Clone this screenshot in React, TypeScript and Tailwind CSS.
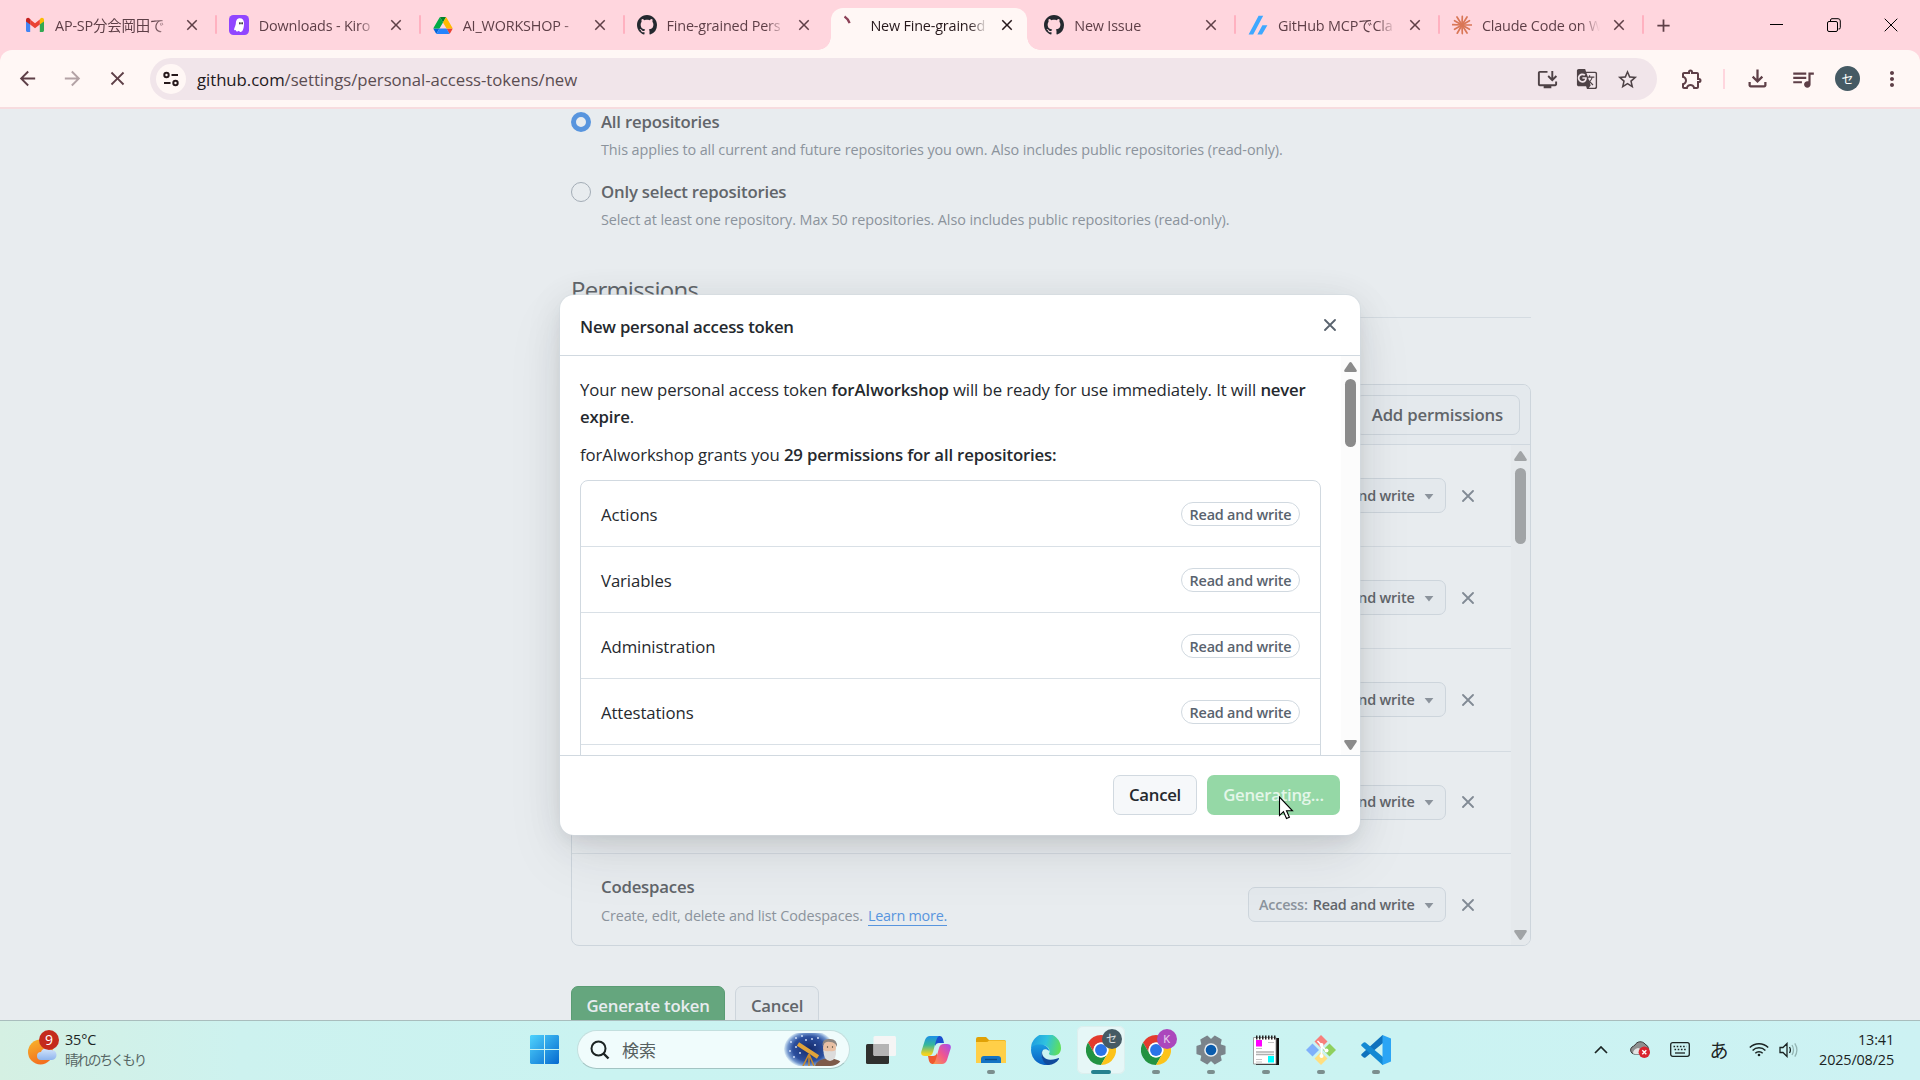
import type { ReactNode } from "react";
import {
  MdAdd,
  MdArrowBack,
  MdArrowForward,
  MdClose,
  MdGTranslate,
  MdMoreVert,
  MdOutlineExtension,
  MdOutlineFileDownload,
  MdOutlineInstallDesktop,
  MdQueueMusic,
  MdStarBorder,
} from "react-icons/md";

/* ---------- Favicons ---------- */

const GmailIcon = () => (
  <svg viewBox="0 0 20 20" className="size-5">
    <path d="M1 5.5V15.6A1.3 1.3 0 0 0 2.3 17H5.2V8z" fill="#4285f4" />
    <path d="M19 5.5V15.6A1.3 1.3 0 0 1 17.7 17H14.8V8z" fill="#34a853" />
    <path d="M14.8 4.6V9.6L19 6.5V5C19 3 16.8 2.2 15.4 3.4z" fill="#fbbc04" />
    <path d="M5.2 9.6V4.6L10 8.2L14.8 4.6V9.6L10 13.2z" fill="#ea4335" />
    <path d="M1 5V6.5L5.2 9.6V4.2L4.6 3.4C3.2 2.2 1 3 1 5z" fill="#c5221f" />
  </svg>
);

const KiroIcon = () => (
  <svg viewBox="0 0 20 20" className="size-5">
    <rect width="20" height="20" rx="4.5" fill="#9046ff" />
    <path d="M10.8 3.2C8 3.2 7 5.4 6.900 8c-.1 2.6-1.6 4.6-1.8 6.2-.1 1 .9 1.2 1.8.7-.1 1.6 1.7 2.2 3 .9.6 1.7 2.7 1.3 3.7-.4 1-1.7 1.5-4.1 1.4-7.3-.1-3-1.5-4.9-4.2-4.9z" fill="#fff" />
    <ellipse cx="10.9" cy="8.3" rx=".7" ry="1.2" fill="#222" />
    <ellipse cx="13.1" cy="8.3" rx=".7" ry="1.2" fill="#222" />
  </svg>
);

const DriveIcon = () => (
  <svg viewBox="0 0 87.3 78" className="h-[17px] w-5">
    <path d="m6.6 66.85 3.85 6.65c.8 1.4 1.95 2.5 3.3 3.3l13.75-23.8h-27.5c0 1.55.4 3.1 1.2 4.5z" fill="#0066da" />
    <path d="m43.65 25-13.75-23.8c-1.35.8-2.5 1.9-3.3 3.3l-25.4 44a9.06 9.06 0 0 0 -1.2 4.5h27.5z" fill="#00ac47" />
    <path d="m73.55 76.8c1.35-.8 2.5-1.9 3.3-3.3l1.6-2.75 7.65-13.25c.8-1.4 1.2-2.95 1.2-4.5h-27.502l5.852 11.5z" fill="#ea4335" />
    <path d="m43.65 25 13.75-23.8c-1.35-.8-2.9-1.2-4.5-1.2h-18.5c-1.6 0-3.15.45-4.5 1.2z" fill="#00832d" />
    <path d="m59.8 53h-32.3l-13.75 23.8c1.35.8 2.9 1.2 4.5 1.2h50.8c1.6 0 3.15-.45 4.5-1.2z" fill="#2684fc" />
    <path d="m73.4 26.5-12.7-22c-.8-1.4-1.95-2.5-3.3-3.3l-13.75 23.8 16.15 28h27.45c0-1.55-.4-3.1-1.2-4.5z" fill="#ffba00" />
  </svg>
);

const ZennIcon = () => (
  <svg viewBox="0 0 20 20" className="size-5">
    <path d="M.6 19.5 10.6.8h4.6L5.2 19.5zM9.4 19.5l5-9.3h5L14 19.5z" fill="#3ea8ff" />
  </svg>
);

const rays = [0, 30, 58, 88, 120, 150, 182, 210, 238, 272, 302, 330];
const ClaudeIcon = () => (
  <svg viewBox="-10 -10 20 20" className="size-5">
    {rays.map((a, i) => (
      <line key={a} x1="0" y1="0" x2={i % 2 ? 8.6 : 9.5} y2="0" stroke="#d97757" strokeWidth="1.7" strokeLinecap="round" transform={`rotate(${a})`} />
    ))}
  </svg>
);

const Spinner = () => (
  <svg viewBox="0 0 20 20" className="size-5">
    <path d="M4.5 1.5C6.8 3 8.600 5 9.6 8.200" fill="none" stroke="#8c4157" strokeWidth="2.2" />
  </svg>
);

const Github = () => (
  <svg viewBox="0 0 16 16" className="size-5 text-[#24292f]" fill="currentColor">
    <path d="M8 0C3.58 0 0 3.58 0 8c0 3.54 2.29 6.53 5.47 7.59.4.07.55-.17.55-.38 0-.19-.01-.82-.01-1.49-2.01.37-2.53-.49-2.69-.94-.09-.23-.48-.94-.82-1.13-.28-.15-.68-.52-.01-.53.63-.01 1.08.58 1.23.82.72 1.21 1.87.87 2.33.66.07-.52.28-.87.51-1.07-1.78-.2-3.64-.89-3.64-3.95 0-.87.31-1.59.82-2.15-.08-.2-.36-1.02.08-2.12 0 0 .67-.21 2.2.82.64-.18 1.32-.27 2-.27.68 0 1.36.09 2 .27 1.53-1.04 2.2-.82 2.2-.82.44 1.1.16 1.92.08 2.12.51.56.82 1.27.82 2.15 0 3.07-1.87 3.75-3.65 3.95.29.25.54.73.54 1.48 0 1.07-.01 1.93-.01 2.2 0 .21.15.46.55.38A8.013 8.013 0 0 0 16 8c0-4.42-3.58-8-8-8z" />
  </svg>
);

/* ---------- Browser chrome ---------- */

type TabInfo = { title: string; icon: ReactNode; active?: boolean; sep?: boolean };
const tabs: TabInfo[] = [
  { title: "AP-SP分会岡田で", icon: <GmailIcon />, sep: true },
  { title: "Downloads - Kiro", icon: <KiroIcon />, sep: true },
  { title: "AI_WORKSHOP -", icon: <DriveIcon />, sep: true },
  { title: "Fine-grained Pers", icon: <Github /> },
  { title: "New Fine-grained", icon: <Spinner />, active: true },
  { title: "New Issue", icon: <Github />, sep: true },
  { title: "GitHub MCPでCla", icon: <ZennIcon />, sep: true },
  { title: "Claude Code on W", icon: <ClaudeIcon />, sep: true },
];

function Tab({ title, icon, active, sep }: TabInfo) {
  return (
    <div className="relative flex h-[50px] w-[203.85px] shrink-0 items-center pl-[12px]">
      {active && (
        <div className="absolute top-[8px] right-[5px] bottom-0 left-[3px] rounded-t-[12px] bg-[#fff7f5]">
          <div className="absolute bottom-0 -left-[13px] size-[13px] bg-[radial-gradient(circle_at_0_0,#ffd6de_12.5px,#fff7f5_13px)]" />
          <div className="absolute -right-[13px] bottom-0 size-[13px] bg-[radial-gradient(circle_at_100%_0,#ffd6de_12.5px,#fff7f5_13px)]" />
        </div>
      )}
      <div className="relative flex size-5 items-center justify-center">{icon}</div>
      <div
        className={`relative mt-px ml-[10px] w-[118px] overflow-hidden text-[14.4px] leading-6 tracking-[-0.012em] whitespace-nowrap [mask-image:linear-gradient(to_right,#000_84%,transparent)] ${
          active ? "text-[#26181b]" : "text-[#5e3f47]"
        }`}
      >
        {title}
      </div>
      <MdClose className={`relative ml-[10px] size-[18px] ${active ? "text-[#26181b]" : "text-[#5e3f47]"}`} />
      {sep && <div className="absolute top-[15px] right-0 h-[19px] w-[2px] rounded bg-[#ffb1c0]" />}
    </div>
  );
}

function TabStrip() {
  return (
    <div className="flex h-[50px] bg-[#ffd6de] pl-[13px]">
      {tabs.map((t, i) => (
        <Tab key={i} {...t} />
      ))}
      <MdAdd className="mt-[15px] ml-[9px] size-[21px] text-[#5e3f47]" />
      <div className="mr-[22px] ml-auto flex items-center gap-[43px] text-black">
        <svg viewBox="0 0 14 14" className="size-[14px]"><path d="M0 6.5H13" stroke="currentColor" fill="none" /></svg>
        <svg viewBox="0 0 14 14" className="size-[14px]" fill="none" stroke="currentColor">
          <rect x=".5" y="3.5" width="10" height="10" rx="1.5" />
          <path d="M3.5 3V2A1.5 1.5 0 0 1 5 .7H11A2.3 2.3 0 0 1 13.3 3V9.5A1.5 1.5 0 0 1 11.5 11" />
        </svg>
        <svg viewBox="0 0 14 14" className="size-[14px]"><path d="M.7 .7L13.3 13.3M13.3 .7L.7 13.3" stroke="currentColor" fill="none" /></svg>
      </div>
    </div>
  );
}

function Toolbar() {
  return (
    <div className="bg-[#ffd6de]">
      <div className="flex h-[59px] items-center rounded-t-[12px] border-b-2 border-[#f7dcdf] bg-[#fff7f5] text-[#5e3f47]">
        <MdArrowBack className="ml-[16px] size-[23px]" />
        <MdArrowForward className="ml-[22px] size-[23px] text-[#b3a2a5]" />
        <MdClose className="ml-[22px] size-[23px]" />
        <div className="mt-px ml-[21px] flex h-[42px] w-[1507px] items-center rounded-full bg-[#f1e5ea] text-[#4e4246]">
          <div className="ml-[6px] flex size-[30px] items-center justify-center rounded-full bg-[#fff7f5]">
            <svg viewBox="0 0 18 18" className="size-[18px]" fill="none" stroke="#26181b" strokeWidth="2">
              <circle cx="4.5" cy="5" r="2.2" />
              <path d="M9.5 5H16M2 13H8.5" />
              <circle cx="13.5" cy="13" r="2.2" />
            </svg>
          </div>
          <div className="mt-px ml-[11px] text-[16.75px] tracking-[-0.003em] text-[#5b4d52]">
            <span className="text-[#22191c]">github.com</span>/settings/personal-access-tokens/new
          </div>
          <MdOutlineInstallDesktop className="ml-auto size-[23px]" />
          <MdGTranslate className="ml-[17px] size-[22px]" />
          <MdStarBorder className="mr-[18px] ml-[18px] size-[23px]" />
        </div>
        <MdOutlineExtension className="ml-[23px] size-[24px]" />
        <div className="ml-[19px] h-5 w-[2px] bg-[#ffd6de]" />
        <MdOutlineFileDownload className="ml-[19px] size-[27px]" />
        <MdQueueMusic className="ml-[19px] size-[26px]" />
        <div className="ml-[19px] flex size-[25px] items-center justify-center rounded-full bg-[#455a64] font-['Noto_Sans_CJK_JP',sans-serif] text-[12px] text-white">セ</div>
        <MdMoreVert className="ml-[20px] size-[24px]" />
      </div>
    </div>
  );
}

/* ---------- GitHub page ---------- */

function RadioOption({ label, note, checked }: { label: string; note: string; checked?: boolean }) {
  return (
    <div className="flex gap-[10px]">
      <div
        className={`mt-[2px] size-5 shrink-0 rounded-full ${
          checked ? "border-[5.5px] border-[#5895de]" : "border border-[#a3acb6]"
        }`}
      />
      <div>
        <div className="text-[16.75px] leading-6 font-semibold tracking-[-0.012em] text-[#61656a]">{label}</div>
        <div className="mt-[6px] text-[14.4px] leading-5 tracking-[-0.006em] text-[#8b939c]">{note}</div>
      </div>
    </div>
  );
}

const Cross = () => (
  <svg viewBox="0 0 12 12" className="size-3" fill="none" stroke="currentColor" strokeWidth="1.8" strokeLinecap="round">
    <path d="M1 1L11 11M11 1L1 11" />
  </svg>
);

const ArrowUp = () => (
  <svg viewBox="0 0 13 10" className="h-[10px] w-[13px]" fill="currentColor">
    <path d="M5.3 .8Q6.5 -.6 7.7 .8L12.6 8Q13.3 10 11.5 10H1.5Q-.3 10 .4 8z" />
  </svg>
);

const ArrowDown = () => (
  <svg viewBox="0 0 13 10" className="h-[10px] w-[13px]" fill="currentColor">
    <path d="M5.3 9.2Q6.5 10.6 7.7 9.2L12.6 2Q13.3 0 11.5 0H1.5Q-.3 0 .4 2z" />
  </svg>
);

function AccessControls() {
  return (
    <div className="mr-[37px] ml-auto flex items-center">
      <div className="flex h-[35px] w-[198px] items-center rounded-[7px] border border-[#cdd5dc] bg-[#e4e9ed] pl-[10px] text-[14.4px] font-semibold tracking-[-0.014em] whitespace-nowrap text-[#61656a]">
        <span className="mr-[5px] text-[#8b939c]">Access:</span>Read and write
        <svg viewBox="0 0 10 6" className="mt-[2px] ml-[10px] h-[6px] w-[10px]" fill="#8b939c"><path d="M.6 0H9.4L5 5.500z" /></svg>
      </div>
      <div className="ml-[16px] text-[#818a94]"><Cross /></div>
    </div>
  );
}

function PermissionsTable() {
  return (
    <div className="mt-[66px] h-[562px] overflow-hidden rounded-[8px] border border-[#cdd5dc]">
      <div className="flex h-[60px] items-center justify-end border-b border-[#d0d8df] bg-[#e4e9ed] pr-[10px]">
        <div className="flex h-10 items-center rounded-[7px] border border-[#cdd5dc] px-[16px] pt-px text-[16.75px] font-semibold tracking-[-0.012em] text-[#61656a]">
          <span>Add permissions</span>
        </div>
      </div>
      <div className="flex h-[500px]">
        <div className="flex-1 overflow-hidden">
          {[0, 1, 2, 3].map((i) => (
            <div key={i} className="flex h-[102.2px] items-center border-b border-[#d4dbe1]">
              <AccessControls />
            </div>
          ))}
          <div className="flex h-[102.2px] items-center pl-[29px]">
            <div className="-mt-[8px]">
              <div className="text-[16.75px] leading-6 font-semibold tracking-[-0.012em] text-[#61656a]">Codespaces</div>
              <div className="mt-[7px] flex gap-[5px] text-[14.4px] leading-5 tracking-[-0.008em] whitespace-nowrap text-[#8b939c]">
                <span>Create, edit, delete and list Codespaces.</span>
                <span className="h-[20px] border-b border-[#5895de] tracking-[-0.016em] text-[#5895de]">Learn more.</span>
              </div>
            </div>
            <AccessControls />
          </div>
        </div>
        <div className="flex w-[19px] flex-col items-center bg-[#e5e9ec] pt-[6px] pb-[5px] text-[#a1a4a6]">
          <ArrowUp />
          <div className="mt-[7px] h-[76px] w-[11px] rounded-full bg-[#a1a4a6]" />
          <div className="mt-auto h-[10px]"><ArrowDown /></div>
        </div>
      </div>
    </div>
  );
}

function Page() {
  return (
    <div className="h-[911px] overflow-hidden bg-[#e8ecef]">
      <div className="ml-[571px] w-[960px]">
        <div className="pt-px">
          <RadioOption checked label="All repositories" note="This applies to all current and future repositories you own. Also includes public repositories (read-only)." />
        </div>
        <div className="mt-[20px]">
          <RadioOption label="Only select repositories" note="Select at least one repository. Max 50 repositories. Also includes public repositories (read-only)." />
        </div>
        <div className="mt-[44px] border-b border-[#d4dbe1] pb-[12px] text-[24px] leading-[31px] tracking-[-0.032em] text-[#61656a]">Permissions</div>
        <PermissionsTable />
        <div className="mt-[40px] flex gap-[10px] text-[16.75px] font-semibold tracking-[-0.014em]">
          <div className="flex h-10 w-[154px] items-center justify-center rounded-[7px] border border-[#5a9c74] bg-[#65a67e] text-[#e8ecef]">Generate token</div>
          <div className="flex h-10 w-[84px] items-center justify-center rounded-[7px] border border-[#cdd5dc] bg-[#e4e9ed] text-[#61656a]">Cancel</div>
        </div>
      </div>
    </div>
  );
}

/* ---------- Dialog ---------- */

function TokenDialog() {
  return (
    <div className="absolute top-[295px] left-[560px] flex h-[540px] w-[800px] flex-col overflow-hidden rounded-[14px] bg-white text-[16.75px] tracking-[-0.006em] text-[#25292e] shadow-[0_0_0_1px_#d1d9e080,0_8px_16px_-4px_#25292e14,0_5px_40px_-4px_#25292e1c,0_23px_58px_0_#25292e14]">
      <div className="flex h-[61px] items-center justify-between border-b border-[#d1d9e0] pr-[24px] pl-[20px]">
        <div className="mt-[3px] font-semibold tracking-[-0.013em]">New personal access token</div>
        <div className="text-[#59636e]"><Cross /></div>
      </div>
      <div className="flex h-[399px] overflow-hidden">
        <div className="flex-1 pt-[20px] pr-[20px] pl-[20px]">
          <p className="leading-[27px] whitespace-nowrap">
            Your new personal access token <b className="font-semibold tracking-[-0.012em]">forAIworkshop</b> will be ready for use immediately. It will{" "}
            <b className="font-semibold tracking-[-0.012em]">never<br />expire</b>.
          </p>
          <p className="mt-[11px] leading-[27px]">
            forAIworkshop grants you <b className="font-semibold tracking-[-0.010em]">29 permissions for all repositories:</b>
          </p>
          <div className="mt-[12px] h-[400px] rounded-t-[8px] border border-[#d1d9e0]">
            {["Actions", "Variables", "Administration", "Attestations"].map((name) => (
              <div key={name} className="flex h-[66px] items-center justify-between border-b border-[#d9e0e6] px-[20px]">
                <span className="mt-[3px]">{name}</span>
                <span className="mt-px flex h-6 w-[119px] items-center justify-center rounded-full border border-[#d1d9e0] pt-[2px] text-[14.4px] font-semibold tracking-[-0.014em] whitespace-nowrap text-[#59636e]">
                  Read and write
                </span>
              </div>
            ))}
          </div>
        </div>
        <div className="flex w-[19px] flex-col items-center bg-[#fcfcfc] pt-[6px] pb-[5px] text-[#8b8b8b]">
          <ArrowUp />
          <div className="mt-[7px] h-[68px] w-[11px] rounded-full bg-[#8b8b8b]" />
          <div className="mt-auto h-[10px]"><ArrowDown /></div>
        </div>
      </div>
      <div className="flex h-[80px] items-center justify-end gap-[10px] border-t border-[#d1d9e0] pr-[20px] pb-px font-semibold tracking-[-0.016em]">
        <div className="flex h-10 w-[84px] items-center justify-center rounded-[7px] border border-[#d1d9e0] bg-[#f6f8fa]">Cancel</div>
        <div className="flex h-10 w-[133px] items-center justify-center rounded-[7px] bg-[#95d8a6] text-[#e4f6e9]">Generating...</div>
      </div>
    </div>
  );
}

const Cursor = () => (
  <svg viewBox="0 0 16 25" className="absolute top-[796px] left-[1278px] h-[25px] w-4">
    <path d="M1.5 1V19.5L5.5 15.7L8.5 22.5L11.4 21.2L8.5 14.8H14.5z" fill="#fff" stroke="#000" strokeWidth="1.1" />
  </svg>
);

/* ---------- Taskbar ---------- */

const Weather = () => (
  <svg viewBox="0 0 34 36" className="h-9 w-[34px]">
    <defs>
      <linearGradient id="sun" x1="0" y1="0" x2=".4" y2="1"><stop stopColor="#f8b62c" /><stop offset="1" stopColor="#f3701f" /></linearGradient>
      <linearGradient id="cloud" x1="0" y1="0" x2="0" y2="1"><stop stopColor="#d5e6fb" /><stop offset="1" stopColor="#8fb5ee" /></linearGradient>
    </defs>
    <circle cx="13.5" cy="22" r="12.5" fill="url(#sun)" />
    <path d="M14 30a4 4 0 0 1 0-8 6 6 0 0 1 10-2 5 5 0 0 1 1 10z" fill="url(#cloud)" />
    <circle cx="22" cy="10" r="10" fill="#c42b1c" />
    <text x="22" y="15" textAnchor="middle" fontSize="14" fill="#fff">9</text>
  </svg>
);

const WindowsLogo = () => (
  <svg viewBox="0 0 29 29" className="size-[29px]">
    <defs><linearGradient id="win" x1="0" y1="0" x2="29" y2="29" gradientUnits="userSpaceOnUse"><stop stopColor="#4fd3fd" /><stop offset="1" stopColor="#0669cf" /></linearGradient></defs>
    <path d="M1 0H14V14H0V1zM15 0H28L29 1V14H15zM0 15H14V29H1L0 28zM15 15H29V28L28 29H15z" fill="url(#win)" />
  </svg>
);

const stars = [[7, 9], [12, 5], [18, 3], [6, 18], [10, 24], [28, 6], [34, 5], [12, 14], [31, 12], [16, 20], [22, 7]];
const SearchArt = () => (
  <svg viewBox="0 0 60 33" className="h-[33px] w-[60px]">
    <defs>
      <radialGradient id="sky"><stop stopColor="#142a6b" /><stop offset=".65" stopColor="#2c4f9e" /><stop offset=".85" stopColor="#6f93cc" /><stop offset="1" stopColor="#d9ebf6" /></radialGradient>
      <clipPath id="artclip"><rect width="60" height="33" rx="14" /></clipPath>
    </defs>
    <g clipPath="url(#artclip)">
      <ellipse cx="25" cy="16" rx="25" ry="19" fill="url(#sky)" />
      {stars.map(([x, y]) => (
        <circle key={`${x}-${y}`} cx={x} cy={y} r=".9" fill="#dfeaff" />
      ))}
      <path d="M14 11L34 24" stroke="#e0a33a" strokeWidth="4" />
      <path d="M25 21L19 33M25 21V33M25 21L30 33" stroke="#c98a2b" strokeWidth="1.5" />
      <path d="M31 33Q33 26 45 25Q57 26 60 33z" fill="#7d5a4a" />
      <ellipse cx="45.5" cy="15" rx="6.5" ry="9" fill="#e8bfa3" />
      <path d="M38.5 13Q38 5 46 6Q53.5 6 53 14Q51 9 46 9Q41 8 38.5 13z" fill="#8c8581" />
      <path d="M39.5 17Q42 19 45.500 18Q49 19 52 17Q53 27 46 28Q39 27 39.5 17z" fill="#dcdcdc" />
      <circle cx="43.500" cy="14" r=".7" fill="#443" />
      <circle cx="48.500" cy="14" r=".7" fill="#443" />
    </g>
  </svg>
);

const TaskView = () => (
  <svg viewBox="0 0 30 28" className="h-7 w-[30px]">
    <rect y="8" width="23" height="20" rx="1.5" fill="#2f302e" />
    <rect x="7.5" width="22.5" height="20" rx="1.5" fill="#f5f5f5" />
    <path d="M7.5 8H23V20H9Q7.5 20 7.5 18.5z" fill="#b4b4b4" />
  </svg>
);

const Copilot = () => (
  <svg viewBox="0 0 30 28" className="h-7 w-[30px]">
    <defs>
      <linearGradient id="cp1" x1="0" y1="0" x2="0" y2="1"><stop stopColor="#1b8fe8" /><stop offset=".45" stopColor="#35b89a" /><stop offset=".9" stopColor="#f2d21f" /></linearGradient>
      <linearGradient id="cp2" x1="1" y1="0" x2="0" y2="1"><stop stopColor="#a44cf0" /><stop offset=".5" stopColor="#f0568f" /><stop offset="1" stopColor="#fb9a45" /></linearGradient>
    </defs>
    <path d="M14 0H19Q21 0 22 3L23 7H18Q15 7 14 10z" fill="#1a4fd0" />
    <path d="M16 28H11Q9 28 8 25L7 20H12Q15 20 16 17z" fill="#f0592f" />
    <path d="M9 0H18Q16 1 15 5L12 16Q11 20 7 20H4Q-1 20 .5 15L4 4Q5.5 0 9 0z" fill="url(#cp1)" />
    <path d="M21 28H12Q14 27 15 23L18 12Q19 8 23 8H26Q31 8 29.5 13L26 24Q24.5 28 21 28z" fill="url(#cp2)" />
  </svg>
);

const Folder = () => (
  <svg viewBox="0 0 30 28" className="h-7 w-[30px]">
    <path d="M0 3Q0 1 2 1H10L13 4H28Q30 4 30 6V10H0z" fill="#e0a106" />
    <path d="M0 6H10Q12 6 13 4.5H28Q30 4.5 30 6.5V27H0z" fill="#ffcf48" />
    <path d="M5 27V23Q5 20 8 20H22Q25 20 25 23V27z" fill="#1474c4" />
    <path d="M9 23.5H21" stroke="#0b4c87" strokeWidth="1.3" />
  </svg>
);

const Edge = () => (
  <svg viewBox="0 0 30 30" className="size-[30px]">
    <defs>
      <linearGradient id="e1" x1="0" y1=".3" x2="1" y2=".5"><stop stopColor="#1f9de0" /><stop offset=".5" stopColor="#2fc2df" /><stop offset="1" stopColor="#5fe05a" /></linearGradient>
      <linearGradient id="e2" x1="0" y1="0" x2="0" y2="1"><stop stopColor="#1b9de2" /><stop offset="1" stopColor="#0a5fc2" /></linearGradient>
    </defs>
    <path d="M0 14A15 15 0 0 1 30 13C30 18 27 20.5 22.5 20.5C19 20.5 17.5 19.5 18 18.5C19.5 16.5 18.5 11 12 10C6 9.5 1 11.5 0 14z" fill="url(#e1)" />
    <path d="M0 15C0 10 6 9 10 9.6C15 10 18 13 18.3 16C14 12.5 10.5 15 10.5 19C10.5 24 14.5 29 19 29.4A15 15 0 0 1 0 15z" fill="url(#e2)" />
    <path d="M12 14.5C9.5 18 12 24.5 19 24.8C23 25 26 23.6 27.5 23C28 23 28.2 23.4 28 24C25.5 28 20.5 30.3 16.5 30C11 27.5 8.5 18 12 14.5z" fill="#114a9c" />
  </svg>
);

const Chrome = ({ badge, tone }: { badge: string; tone: string }) => (
  <div className="relative size-[30px]">
    <svg viewBox="0 0 48 48" className="size-[30px]">
      <path d="M24 12h20.78A24 24 0 0 0 3.215 12L13.6 30A12 12 0 0 1 24 12z" fill="#e33b2e" />
      <path d="M13.6 30L3.215 12A24 24 0 0 0 24 48L34.4 30A12 12 0 0 1 13.6 30z" fill="#229342" />
      <path d="M34.4 30L24 48A24 24 0 0 0 44.785 12H24A12 12 0 0 1 34.4 30z" fill="#fcc31a" />
      <circle cx="24" cy="24" r="12" fill="#fff" />
      <circle cx="24" cy="24" r="9.5" fill="#2b74e8" />
    </svg>
    <div className={`absolute -top-[6px] left-[16px] flex size-5 items-center justify-center rounded-full font-['Open_Sans','Noto_Sans_CJK_JP',sans-serif] text-[11px] leading-none font-normal text-white/80 ${tone}`}>{badge}</div>
  </div>
);

const Gear = () => (
  <svg viewBox="-15 -15 30 30" className="size-[30px]">
    {[0, 60, 120, 180, 240, 300].map((a) => (
      <path key={a} d="M-5 -9L-3.5 -13.8H3.5L5 -9z" transform={`rotate(${a + 30})`} fill="#7b848b" stroke="#7b848b" strokeWidth="1.5" strokeLinejoin="round" />
    ))}
    <circle r="11" fill="#7b848b" />
    <circle r="6.8" fill="#e9eef1" />
    <circle r="5.3" fill="#0b5cad" />
  </svg>
);

const Notepad = () => (
  <svg viewBox="0 0 26 30" className="h-[30px] w-[26px]">
    <path d="M3 3H26V30H3z" fill="#111" />
    <path d="M.5 2.5H23V29H.5z" fill="#fff" stroke="#888" strokeWidth=".8" />
    <path d="M3 2.5H24" stroke="#222" strokeWidth="4" strokeDasharray="1.5 1.5" />
    <rect x="3" y="5" width="6" height="6.5" fill="#f0f" />
    <path d="M3 13.5H9M15 7.5H21M3 24.5H9M3 27H9" stroke="#c4c4c4" />
    <path d="M3 17H21M3 19.5H21" stroke="#b0b0b0" strokeWidth="1.5" />
    <rect x="15" y="21" width="6" height="6.5" fill="#0ff" />
  </svg>
);

const GitIcon = () => (
  <svg viewBox="0 0 30 30" className="size-[30px]">
    <path d="M15 0L21.5 6.5L15 13L8.5 6.5z" fill="#f77f7c" />
    <path d="M23.5 8.5L30 15L23.5 21.5L17 15z" fill="#8fd05e" />
    <path d="M15 17L21.5 23.5L15 30L8.5 23.5z" fill="#ffdf80" />
    <path d="M6.5 8.5L13 15L6.5 21.5L0 15z" fill="#7fb0fb" />
    <path d="M11.5 6L15.5 10V22M15.5 11L20 15.5" stroke="#fff" strokeWidth="1.6" fill="none" />
    <g fill="#fff"><circle cx="15.5" cy="10" r="2" /><circle cx="15.5" cy="21" r="2" /><circle cx="20.5" cy="15.5" r="2" /></g>
  </svg>
);

const VsCode = () => (
  <svg viewBox="0 0 30 30" className="size-[30px]">
    <path d="M22 8L4.5 22.5Q3.5 23.2 2.7 22.5L.6 20.7Q-.2 19.8 .6 19L21 .6Q21.5 0 22 0z" fill="#0f72bd" />
    <path d="M22 22L4.5 7.5Q3.5 6.8 2.7 7.5L.6 9.3Q-.2 10.2 .6 11L21 29.4Q21.5 30 22 30z" fill="#1389d3" />
    <path d="M21.5 0L30 3.5V26.5L21.5 30z" fill="#2ba5f5" />
  </svg>
);

function Slot({ children, mark, active }: { children: ReactNode; mark?: boolean; active?: boolean }) {
  return (
    <div className="flex w-[55px] justify-center">
      <div className={`relative flex size-12 items-center justify-center rounded-[6px] ${active ? "bg-[#e6f7f7] shadow-[inset_0_0_0_1px_#dcefee]" : ""}`}>
        {children}
        {mark && <div className={`absolute bottom-0 h-1 rounded-full ${active ? "w-5 bg-[#25818f]" : "w-2 bg-[#7b8e8e]"}`} />}
      </div>
    </div>
  );
}

function Tray() {
  return (
    <div className="mr-[26px] ml-auto flex items-center text-[#1b2423]">
      <svg viewBox="0 0 14 8" className="h-2 w-[14px]" fill="none" stroke="currentColor" strokeWidth="1.7"><path d="M1 7L7 1L13 7" /></svg>
      <svg viewBox="0 0 20 17" className="ml-[22px] h-[17px] w-5">
        <path d="M4 13A4 4 0 0 1 2 6Q4 5 5 4A6 6 0 0 1 15 3Q19 5 18.5 9L12 13z" fill="#8f8f8f" stroke="#3a3a3a" />
        <path d="M3 12.5Q3 8 8 7L16 9V13H5z" fill="#e3e3e3" />
        <circle cx="14.3" cy="11.3" r="5.7" fill="#d9252f" />
        <path d="M12.3 9.3L16.3 13.3M16.3 9.3L12.3 13.3" stroke="#fff" strokeWidth="1.4" />
      </svg>
      <svg viewBox="0 0 20 15" className="ml-[20px] h-[15px] w-5" fill="none" stroke="currentColor" strokeWidth="1.3">
        <rect x=".7" y=".7" width="18.6" height="13.6" rx="2" />
        <path d="M3.5 4.5H16.5M4.5 7.5H16" strokeWidth="1.6" strokeDasharray="1.6 1.6" />
        <path d="M5 11H15" />
      </svg>
      <span className="ml-[19px] w-[20px] text-center font-['Noto_Sans_CJK_JP',sans-serif] text-[19px] leading-none">あ</span>
      <svg viewBox="0 0 20 15" className="ml-[20px] h-[15px] w-5" fill="none" stroke="currentColor" strokeWidth="1.5">
        <path d="M.8 5.5A13 13 0 0 1 19.2 5.5M3.6 8.5A9 9 0 0 1 16.4 8.5M6.3 11.2A5.2 5.2 0 0 1 13.7 11.2" />
        <circle cx="10" cy="13" r="1.3" fill="currentColor" stroke="none" />
      </svg>
      <svg viewBox="0 0 20 16" className="ml-[10px] h-4 w-5" fill="none" stroke="currentColor" strokeWidth="1.3">
        <path d="M1 5.5H4L8 1.5V14.5L4 10.5H1zM10.5 5Q12.3 8 10.5 11" />
        <path d="M13 3Q16 8 13 13M15.8 1.3Q20 8 15.8 14.7" stroke="#93b5b3" />
      </svg>
      <div className="ml-[20px] text-right text-[14.4px] leading-5 tracking-[-0.010em]">
        <div>13:41</div>
        <div>2025/08/25</div>
      </div>
    </div>
  );
}

function Taskbar() {
  return (
    <div className="flex h-[60px] items-center border-t border-[#a9bdbd] bg-[linear-gradient(90deg,#d5f0e3_0px,#cdf2ef_240px,#caf3f1_600px,#cbf3f2_1400px,#cdf2f3_1920px)] pb-[2px]">
      <div className="flex w-[530px] items-center pl-[27px]">
        <div className="mb-[4px]"><Weather /></div>
        <div className="ml-[4px] text-[14.4px] leading-5 text-[#1b2423]">
          <div className="tracking-[-0.01em]">35°C</div>
          <div className="-mt-px font-['Noto_Sans_CJK_JP',sans-serif] text-[13.5px] tracking-[-0.15em] text-[#566664]">晴れのちくもり</div>
        </div>
      </div>
      <WindowsLogo />
      <div className="ml-[18px] flex h-[39px] w-[273px] items-center rounded-full border border-[#c3dfde] border-b-[#a3c4c3] bg-[#f0fcfc] pr-[5px] pl-[12px]">
        <svg viewBox="0 0 20 20" className="size-5" fill="none" stroke="#1b2423" strokeWidth="2"><circle cx="8.5" cy="8.5" r="7" /><path d="M13.5 13.5L18.5 18.5" strokeWidth="2.4" /></svg>
        <span className="ml-[12px] font-['Noto_Sans_CJK_JP',sans-serif] text-[17px] text-[#566060]">検索</span>
        <div className="ml-auto"><SearchArt /></div>
      </div>
      <div className="ml-[3px] flex">
        <Slot><TaskView /></Slot>
        <Slot><Copilot /></Slot>
        <Slot mark><Folder /></Slot>
        <Slot><Edge /></Slot>
        <Slot mark active><Chrome badge="セ" tone="bg-[#455a64]" /></Slot>
        <Slot mark><Chrome badge="K" tone="bg-[#ab47bc]" /></Slot>
        <Slot mark><Gear /></Slot>
        <Slot mark><Notepad /></Slot>
        <Slot mark><GitIcon /></Slot>
        <Slot mark><VsCode /></Slot>
      </div>
      <Tray />
    </div>
  );
}

export default function App() {
  return (
    <div className="relative h-[1080px] w-[1920px] overflow-hidden font-['Open_Sans','Noto_Sans_CJK_JP',sans-serif]">
      <TabStrip />
      <Toolbar />
      <Page />
      <Taskbar />
      <TokenDialog />
      <Cursor />
    </div>
  );
}
